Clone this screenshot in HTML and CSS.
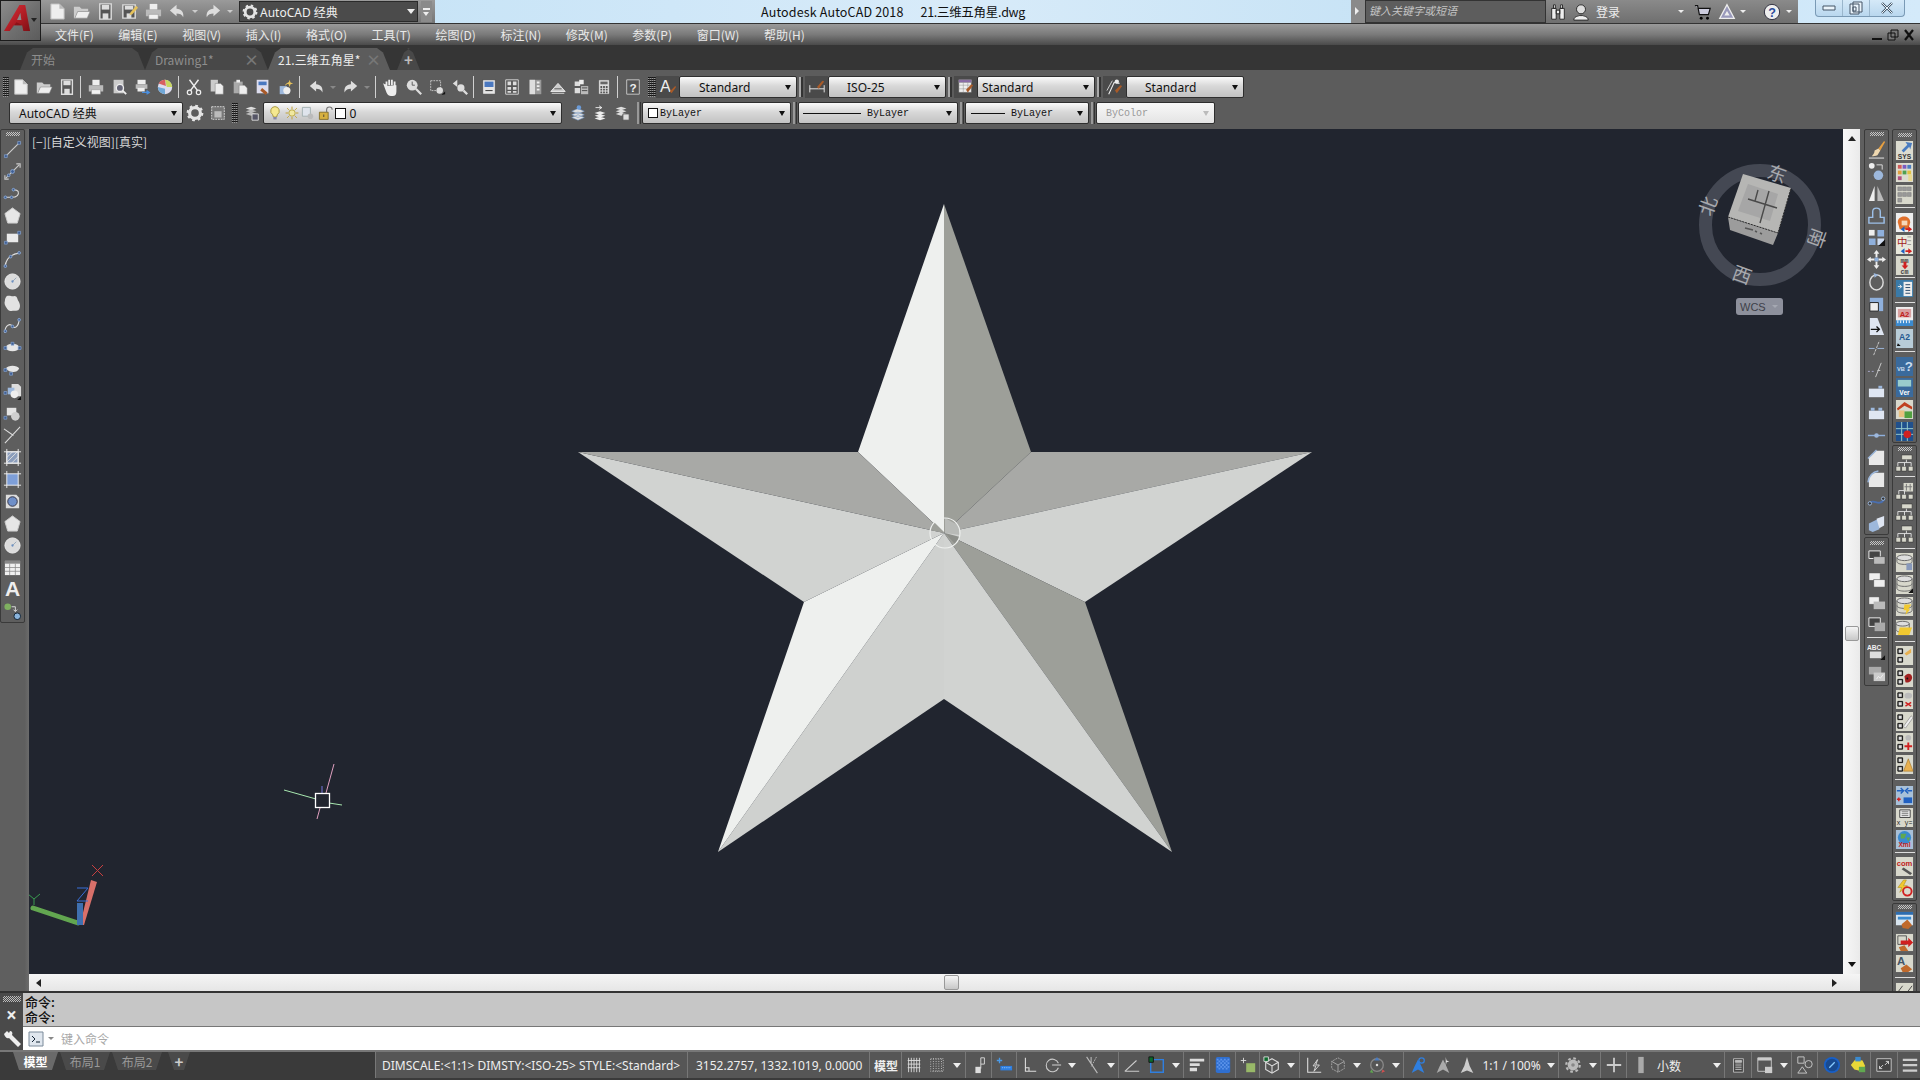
FILE: index.html
```html
<!DOCTYPE html>
<html lang="zh">
<head>
<meta charset="utf-8">
<title>Autodesk AutoCAD 2018</title>
<link rel="stylesheet" href="styles.css">
</head>
<body>
<svg class="defs" aria-hidden="true">
<defs><linearGradient id="logored" x1="0" y1="0" x2="1" y2="1"><stop offset="0" stop-color="#d8323a"/><stop offset=".55" stop-color="#b01c24"/><stop offset="1" stop-color="#7c1016"/></linearGradient></defs>
<symbol id="new" viewBox="0 0 20 20"><path d="M3 2h9l5 5v11H3z" fill="#eee" stroke="#bbb"/><path d="M12 2v5h5" fill="#bbb"/></symbol>
<symbol id="open" viewBox="0 0 20 20"><path d="M2 5h6l2 2h7v3H6l-3 7H2z" fill="#ccc"/><path d="M6 10h13l-3 7H3z" fill="#eee" stroke="#888" stroke-width=".6"/></symbol>
<symbol id="save" viewBox="0 0 20 20"><path d="M4 2h12v16H4z" fill="#555" stroke="#ddd" stroke-width="1.5"/><path d="M6 3h8v5H6z" fill="#ddd"/><path d="M7 12h6v6H7z" fill="#ddd"/></symbol>
<symbol id="saveas" viewBox="0 0 20 20"><path d="M3 3h13v14H3z" fill="#555" stroke="#ddd" stroke-width="1.5"/><path d="M5 4h9v4H5z" fill="#ddd"/><path d="M7 12h5v5H7z" fill="#ddd"/><path d="M11 11l6-7 2 2-6 7-3 1z" fill="#e6c25a"/></symbol>
<symbol id="print" viewBox="0 0 20 20"><path d="M6 2h8v6H6z" fill="#eee"/><path d="M2 8h16v7H2z" fill="#bbb"/><path d="M5 13h10v5H5z" fill="#f2f2f2" stroke="#888" stroke-width=".5"/></symbol>
<symbol id="preview" viewBox="0 0 20 20"><path d="M4 2h11v15H4z" fill="#ccc"/><circle cx="11" cy="11" r="4" fill="#667" stroke="#eee" stroke-width="1.5"/><path d="M14 14l4 4" stroke="#eee" stroke-width="2"/></symbol>
<symbol id="publish" viewBox="0 0 20 20"><path d="M5 2h9v5H5z" fill="#eee"/><path d="M3 7h13v5H3z" fill="#bbb"/><path d="M5 11h8v4H5z" fill="#eee"/><path d="M10 16h7M15 14l3 2-3 2" stroke="#4a8fe0" fill="none" stroke-width="1.5"/></symbol>
<symbol id="ball" viewBox="0 0 20 20"><circle cx="10" cy="10" r="8" fill="#dde"/><path d="M10 2a8 8 0 0 1 8 8h-6z" fill="#c8d860"/><path d="M3 6a8 8 0 0 1 7-4l1 7z" fill="#d86060"/><path d="M2 10a8 8 0 0 0 8 8V12z" fill="#70a8d8"/></symbol>
<symbol id="cut" viewBox="0 0 20 20"><path d="M5 2l9 12M15 2L6 14" stroke="#eee" stroke-width="1.6"/><circle cx="5" cy="16" r="2.4" fill="none" stroke="#eee" stroke-width="1.4"/><circle cx="15" cy="16" r="2.4" fill="none" stroke="#eee" stroke-width="1.4"/></symbol>
<symbol id="copy" viewBox="0 0 20 20"><path d="M3 2h8v13H3z" fill="#ccc"/><path d="M8 6h6l3 3v9H8z" fill="#eee" stroke="#777" stroke-width=".5"/></symbol>
<symbol id="paste" viewBox="0 0 20 20"><path d="M3 4h10v13H3z" fill="#aaa"/><path d="M6 2h4v3H6z" fill="#eee"/><path d="M9 8h6l3 3v7H9z" fill="#eee" stroke="#777" stroke-width=".5"/></symbol>
<symbol id="match" viewBox="0 0 20 20"><path d="M3 2h13v15H3z" fill="#dde"/><path d="M5 4h9v4H5z" fill="#4a78c0"/><path d="M9 11l6 5-2 3-6-5z" fill="#a85a28"/></symbol>
<symbol id="bstar" viewBox="0 0 20 20"><path d="M3 9h8v9H3z" fill="#9db8dc"/><circle cx="11" cy="14" r="4" fill="#eee"/><path d="M14 2l1 3 3 1-3 1-1 3-1-3-3-1 3-1z" fill="#e6c25a"/><path d="M9 8l4-3" stroke="#e6c25a"/></symbol>
<symbol id="undo" viewBox="0 0 20 20"><path d="M9 3L2 9l7 6v-3c3 0 6 1 7 4 1-5-2-9-7-9z" fill="#ddd"/></symbol>
<symbol id="redo" viewBox="0 0 20 20"><path d="M11 3l7 6-7 6v-3c-3 0-6 1-7 4-1-5 2-9 7-9z" fill="#ddd"/></symbol>
<symbol id="pan" viewBox="0 0 20 20"><path d="M5 9V4M8 8V2M11 8V2M14 9V4M5 9l-2-1 3 8c1 2 2 3 4 3h2c2 0 3-2 3-4V8" fill="#eee" stroke="#eee" stroke-width="2"/></symbol>
<symbol id="zrt" viewBox="0 0 20 20"><circle cx="8" cy="8" r="6" fill="#ddd"/><path d="M8 4v4h3" stroke="#555" fill="none"/><path d="M12 12l6 6" stroke="#ddd" stroke-width="2.5"/></symbol>
<symbol id="zwin" viewBox="0 0 20 20"><path d="M3 3h11v11H3z" fill="none" stroke="#ccc" stroke-dasharray="2 1"/><circle cx="13" cy="14" r="3.6" fill="#ddd"/><path d="M15 19l4-1v-3z" fill="#111"/></symbol>
<symbol id="zprev" viewBox="0 0 20 20"><path d="M2 6l5-4v8z" fill="#ddd"/><circle cx="11" cy="11" r="4" fill="#ddd"/><path d="M14 14l4 4" stroke="#ddd" stroke-width="2.5"/></symbol>
<symbol id="props" viewBox="0 0 20 20"><path d="M3 2h14v16H3z" fill="#e6e6e6" stroke="#333" stroke-width=".6"/><path d="M5 4h10v6H5z" fill="#4a78c0"/><path d="M6 14h8" stroke="#222"/></symbol>
<symbol id="dc" viewBox="0 0 20 20"><path d="M3 2h14v16H3z" fill="#555" stroke="#ddd"/><path d="M5 4h4v4H5zM11 4h4v4h-4zM5 10h4v3H5zM11 10h4v3h-4zM5 14.500h4v2H5zM11 14.500h4v2h-4z" fill="#ddd"/></symbol>
<symbol id="tool" viewBox="0 0 20 20"><path d="M4 2h13v16H4z" fill="#999"/><path d="M4 2h6v16H4z" fill="#ddd"/><path d="M12 5h3M12 9h3M12 13h3" stroke="#eee" stroke-width="2"/></symbol>
<symbol id="sheet" viewBox="0 0 20 20"><path d="M2 15L10 6l8 9z" fill="#ccc" stroke="#eee"/><path d="M6 12h8" stroke="#555"/><path d="M3 17h14" stroke="#ddd"/></symbol>
<symbol id="mark" viewBox="0 0 20 20"><path d="M3 4h6v5H3zM3 11h6v6H3z" fill="#ddd"/><path d="M8 2h5v5H8z" fill="#eee"/><path d="M10 9h8v9h-8z" fill="#bbb"/><path d="M11 11h6M11 14h6" stroke="#444"/></symbol>
<symbol id="calc" viewBox="0 0 20 20"><path d="M4 2h12v16H4z" fill="#ddd" stroke="#333" stroke-width=".5"/><path d="M6 4h8v3H6z" fill="#666"/><path d="M6 9h2v2H6zM9 9h2v2H9zM12 9h2v2h-2zM6 12h2v2H6zM9 12h2v2H9zM12 12h2v2h-2zM6 15h2v2H6zM9 15h2v2H9zM12 15h2v2h-2z" fill="#555"/></symbol>
<symbol id="gear" viewBox="0 0 20 20"><circle cx="10" cy="10" r="6" fill="none" stroke="#e4e4e4" stroke-width="3.500"/><circle cx="10" cy="10" r="8" fill="none" stroke="#e4e4e4" stroke-width="2.600" stroke-dasharray="3 3.280"/></symbol>
<symbol id="wsset" viewBox="0 0 20 20"><path d="M3 3h14v14H3z" fill="#777" stroke="#ddd" stroke-dasharray="2 1"/><path d="M6 8h8v7H6z" fill="#bbb"/></symbol>
<symbol id="layer" viewBox="0 0 20 20"><path d="M3 5l6-2 6 2-6 2z" fill="#ddd"/><path d="M3 8l6-2 6 2-6 2zM3 11l6-2 6 2-6 2z" fill="#bbb"/><path d="M10 11h7v7h-7z" fill="#556" stroke="#ddd"/></symbol>
<symbol id="layercur" viewBox="0 0 20 20"><path d="M3 8l7-3 7 3-7 3zM3 12l7-3 7 3-7 3zM3 15l7-3 7 3-7 3z" fill="#e0e0e0" stroke="#6b8fc0" stroke-width=".6"/><circle cx="11" cy="4" r="2.500" fill="#6b9bd8"/></symbol>
<symbol id="layerst" viewBox="0 0 20 20"><path d="M4 10l6-2 6 2-6 2zM4 13l6-2 6 2-6 2zM4 16l6-2 6 2-6 2z" fill="#eee"/><path d="M5 4h7M9 2l3 2-3 2" stroke="#eee" fill="none"/></symbol>
<symbol id="layerdoc" viewBox="0 0 20 20"><path d="M3 5l6-2 6 2-6 2zM3 8l6-2 6 2-6 2zM3 11l6-2 6 2-6 2z" fill="#ddd"/><path d="M11 11h7v7h-7z" fill="#ddd" stroke="#555"/></symbol>
<symbol id="bulb" viewBox="0 0 20 20"><path d="M10 2a5.500 5.500 0 0 1 3 10l-1 3H8l-1-3a5.500 5.500 0 0 1 3-10z" fill="#f5e890" stroke="#9a8a30"/><path d="M8 15h4v3H8z" fill="#8888a8"/></symbol>
<symbol id="sun" viewBox="0 0 20 20"><circle cx="10" cy="10" r="4" fill="#f0e8a0" stroke="#b09a30"/><path d="M10 2v3M10 15v3M2 10h3M15 10h3M4 4l2 2M14 14l2 2M16 4l-2 2M4 16l2-2" stroke="#c0a030" stroke-width="1.200"/></symbol>
<symbol id="vpf" viewBox="0 0 20 20"><path d="M3 3h10v11H3z" fill="#dfe4ec" stroke="#9aa"/><circle cx="13" cy="14" r="3.500" fill="#bbb"/></symbol>
<symbol id="lock" viewBox="0 0 20 20"><path d="M3 9h11v9H3z" fill="#d6b040" stroke="#7a6420"/><path d="M6 9V6a3.500 3.500 0 0 1 7 0" fill="none" stroke="#777" stroke-width="1.400" transform="translate(6 0)"/><path d="M8 12h1v3H8z" fill="#333"/></symbol>
<symbol id="dim-style" viewBox="0 0 20 20"><path d="M2 8v8M18 8v8M2 12h16" stroke="#eee"/><path d="M10 10l6-7 2 1-6 8z" fill="#a85a28"/></symbol>
<symbol id="tb-style" viewBox="0 0 20 20"><path d="M2 2h14v14H2z" fill="#eee" stroke="#555" stroke-width=".5"/><path d="M2 2h14v3H2zM2 8h14M2 12h14M7 5v11M12 5v11" fill="#8a6aa8" stroke="#888" stroke-width=".5"/><path d="M10 13l6-6 2 1-6 8z" fill="#a85a28"/></symbol>
<symbol id="ml-style" viewBox="0 0 20 20"><path d="M3 18L9 5l6 1" fill="none" stroke="#eee" stroke-width="1.200"/><path d="M1 14L7 3" stroke="#ddd"/><circle cx="12" cy="4" r="2.400" fill="#eee"/><path d="M10 14l6-6 2 1-6 8z" fill="#a85a28"/></symbol>
<symbol id="line" viewBox="0 0 20 20"><path d="M3 17L17 3" stroke="#ccc" stroke-width="1.200"/><path d="M1.500 15.500h3v3h-3zM15.500 1.500h3v3h-3z" fill="#3f5f95" stroke="#8aa6d0" stroke-width=".7"/></symbol>
<symbol id="xline" viewBox="0 0 20 20"><path d="M3 17L17 3" stroke="#ccc" stroke-width="1.200"/><path d="M2 14v4h4M14 2h4v4" stroke="#ccc" fill="none" stroke-width="1.200"/><circle cx="10" cy="10" r="2" fill="#3f5f95" stroke="#8aa6d0"/><circle cx="6" cy="14" r="1.400" fill="#3f5f95" stroke="#8aa6d0"/></symbol>
<symbol id="pline" viewBox="0 0 20 20"><path d="M2 14h7c6 0 8-3 7-6-1-2-3-2-5-2" stroke="#ddd" fill="none" stroke-width="1.100"/><circle cx="2.500" cy="14" r="1.400" fill="#3f5f95" stroke="#8aa6d0"/><circle cx="9" cy="14" r="1.400" fill="#3f5f95" stroke="#8aa6d0"/><circle cx="11" cy="6" r="1.400" fill="#3f5f95" stroke="#8aa6d0"/></symbol>
<symbol id="poly" viewBox="0 0 20 20"><path d="M10 2l8 6-3 10H5L2 8z" fill="#e6e6e6" stroke="#ccc"/></symbol>
<symbol id="rect" viewBox="0 0 20 20"><path d="M4 6h12v9H4z" fill="#eaeaea"/><path d="M1.500 14h3v3h-3zM15.500 3.500h3v3h-3z" fill="#3f5f95" stroke="#8aa6d0" stroke-width=".7"/></symbol>
<symbol id="arc" viewBox="0 0 20 20"><path d="M2 18C3 9 9 4 18 3" stroke="#ddd" fill="none" stroke-width="1.200"/><circle cx="2.500" cy="17" r="1.400" fill="#3f5f95" stroke="#8aa6d0"/><circle cx="8" cy="7" r="1.400" fill="#3f5f95" stroke="#8aa6d0"/><circle cx="17" cy="3" r="1.400" fill="#3f5f95" stroke="#8aa6d0"/></symbol>
<symbol id="circle" viewBox="0 0 20 20"><circle cx="10" cy="10" r="8" fill="#dcdcdc" stroke="#eee"/><path d="M10 10l4-4" stroke="#9ab"/><circle cx="10" cy="10" r="1.200" fill="#6b8fc0"/></symbol>
<symbol id="cloud" viewBox="0 0 20 20"><path d="M4 2c4-1 5 1 8 0 3 0 3 3 4 5 2 3 3 7 0 10-3 1-5 0-7 1-2 0-4-1-5-3-2-3-3-5-2-8 0-2 1-4 2-5z" fill="#e2e2e2"/></symbol>
<symbol id="spline" viewBox="0 0 20 20"><path d="M2 18C2 8 8 8 10 11s7 0 7-8" stroke="#ddd" fill="none" stroke-width="1.200"/><circle cx="2.500" cy="16" r="1.400" fill="#3f5f95" stroke="#8aa6d0"/><circle cx="10" cy="11" r="1.400" fill="#3f5f95" stroke="#8aa6d0"/><circle cx="17" cy="4" r="1.400" fill="#3f5f95" stroke="#8aa6d0"/></symbol>
<symbol id="ell" viewBox="0 0 20 20"><ellipse cx="10" cy="10" rx="7" ry="4" fill="#e6e6e6"/><path d="M1 9h3v3H1zM16 9h3v3h-3zM8.500 4.500h3v3h-3z" fill="#3f5f95" stroke="#8aa6d0" stroke-width=".7"/></symbol>
<symbol id="ellarc" viewBox="0 0 20 20"><path d="M3 9c2-4 12-4 14 0-2 5-10 5-14 0z" fill="#e6e6e6"/><path d="M1 9h3v3H1zM7 13h3v3H7z" fill="#3f5f95" stroke="#8aa6d0" stroke-width=".7"/></symbol>
<symbol id="insert" viewBox="0 0 20 20"><path d="M9 2h7l3 3v10H9z" fill="#ddd"/><path d="M5 6h7v7H5z" fill="#9db8dc"/><circle cx="12" cy="13" r="4" fill="#eee"/><path d="M1 10h3v3H1z" fill="#3f5f95" stroke="#8aa6d0" stroke-width=".7"/><path d="M15 19h4v-4z" fill="#111"/></symbol>
<symbol id="block" viewBox="0 0 20 20"><path d="M4 4h10v8H4z" fill="#e4e4e4"/><circle cx="13" cy="13" r="4.500" fill="#cfcfcf"/><path d="M1 13h3v3H1z" fill="#3f5f95" stroke="#8aa6d0" stroke-width=".7"/></symbol>
<symbol id="point" viewBox="0 0 20 20"><path d="M1 3l10 7M18 1L2 18" stroke="#ddd" stroke-width="1.100"/></symbol>
<symbol id="hatch" viewBox="0 0 20 20"><path d="M4 4h12v12H4z" fill="#8b9dbb" stroke="#eee"/><path d="M4 10l6-6M4 15L15 4M9 16l7-7" stroke="#ddd"/><path d="M1 4h18M1 16h18M4 1v18M16 1v18" stroke="#eee"/></symbol>
<symbol id="grad" viewBox="0 0 20 20"><path d="M4 4h12v12H4z" fill="#7e9fd8"/><path d="M1 4h18M1 16h18M4 1v18M16 1v18" stroke="#eee"/></symbol>
<symbol id="region" viewBox="0 0 20 20"><path d="M3 3h11l3 3v11H3z" fill="#ddd"/><circle cx="10" cy="10" r="5" fill="#6f8fc8" stroke="#334"/></symbol>
<symbol id="table" viewBox="0 0 20 20"><path d="M2 3h16v15H2z" fill="#f0f0f0"/><path d="M2 3h16v3H2z" fill="#888"/><path d="M2 10h16M2 14h16M7 6v12M13 6v12" stroke="#888" stroke-width=".8"/></symbol>
<symbol id="addpt" viewBox="0 0 20 20"><circle cx="5" cy="5" r="3.500" fill="#7fb060"/><circle cx="15" cy="15" r="3.500" fill="#8ab4dc" stroke="#123"/><path d="M9 5h4v5M11 8l2 2 2-2" stroke="#ddd" fill="none"/></symbol>
<symbol id="brush" viewBox="0 0 20 20"><path d="M12 9l6-8 1 1-5 9z" fill="#e8a040"/><path d="M8 11l4-2 2 2-3 5c-2 1-4 1-6 1 1-1 3-3 3-6z" fill="#efd8b0"/><path d="M2 19h16" stroke="#eee"/></symbol>
<symbol id="copy3" viewBox="0 0 20 20"><circle cx="5" cy="4" r="3" fill="#eee"/><circle cx="12" cy="14" r="5" fill="#9db8dc"/><path d="M10 3h6v5" stroke="#ddd" fill="none"/></symbol>
<symbol id="mirror" viewBox="0 0 20 20"><path d="M8 2v16H2z" fill="#eee"/><path d="M11 2v16h7z" fill="#bbb"/></symbol>
<symbol id="offs" viewBox="0 0 20 20"><path d="M2 18V12h4V6c0-5 8-5 8 0v6h4v6z" fill="none" stroke="#9dc0e8" stroke-width="1.500"/></symbol>
<symbol id="arr" viewBox="0 0 20 20"><path d="M2 2h6v6H2z" fill="#eee"/><path d="M11 2h7v7h-7zM2 11h7v7H2z" fill="#8fb0dc"/><path d="M11 11h7v7h-7z" fill="#cfdcf0"/><path d="M12 19h7v-7z" fill="#111"/></symbol>
<symbol id="move" viewBox="0 0 20 20"><path d="M10 0l3 4h-2v4H9V4H7zM10 20l-3-4h2v-4h2v4h2zM0 10l4-3v2h4v2H4v2zM20 10l-4 3v-2h-4V9h4V7z" fill="#eee"/><path d="M8 8h4v4H8z" fill="#8fb0dc"/></symbol>
<symbol id="rot" viewBox="0 0 20 20"><ellipse cx="10" cy="11" rx="7" ry="8" fill="none" stroke="#ddd" stroke-width="1.500"/><path d="M7 1l5 2-4 3z" fill="#9db8dc"/></symbol>
<symbol id="scale" viewBox="0 0 20 20"><path d="M3 4h14v14H3z" fill="#8fb0dc"/><path d="M3 9h9v9H3z" fill="#eee" stroke="#222"/></symbol>
<symbol id="stretch" viewBox="0 0 20 20"><path d="M3 2h8l7 18H3z" fill="#dfe6f2"/><path d="M4 14h9M10 11l3 3-3 3" stroke="#111" fill="none" stroke-width="1.400"/></symbol>
<symbol id="trim" viewBox="0 0 20 20"><path d="M2 11h6M11 11h7" stroke="#9db8dc"/><path d="M7 18L13 3" stroke="#ccc" stroke-dasharray="3 1"/></symbol>
<symbol id="ext" viewBox="0 0 20 20"><path d="M1 12h8" stroke="#aac" stroke-dasharray="2 2"/><path d="M11 11h3M9 18l6-15" stroke="#ccc"/></symbol>
<symbol id="brk" viewBox="0 0 20 20"><path d="M2 7h16v9H2z" fill="#dfe6f2"/><path d="M12 4h4v3h-4z" fill="#9db8dc"/></symbol>
<symbol id="brk2" viewBox="0 0 20 20"><path d="M2 7h16v9H2z" fill="#dfe6f2"/><path d="M4 4h4v3H4zM12 4h4v3h-4z" fill="#9db8dc"/></symbol>
<symbol id="join" viewBox="0 0 20 20"><path d="M1 10h18" stroke="#8fb0dc" stroke-width="1.500"/><circle cx="10" cy="10" r="2.400" fill="#9db8dc"/></symbol>
<symbol id="cham" viewBox="0 0 20 20"><path d="M2 18V10L10 3h8v15z" fill="#e8e8e8"/><path d="M1 11L10 2" stroke="#9db8dc" stroke-width="1.500"/></symbol>
<symbol id="fil" viewBox="0 0 20 20"><path d="M2 18v-8c0-4 4-7 8-7h8v15z" fill="#e8e8e8"/><path d="M1 13C2 6 6 2 12 1" stroke="#9db8dc" stroke-width="1.500" fill="none"/></symbol>
<symbol id="blend" viewBox="0 0 20 20"><path d="M2 12c5-6 10 4 16-4" stroke="#4a6fb0" fill="none" stroke-width="2"/><circle cx="3" cy="12" r="1.800" fill="#333" stroke="#9db8dc"/><circle cx="17" cy="7" r="1.800" fill="#333" stroke="#9db8dc"/></symbol>
<symbol id="expl" viewBox="0 0 20 20"><path d="M2 10l8-4 3 1v9l-7 3-4-2z" fill="#9db8dc"/><path d="M10 5l8-3v10l-5 3z" fill="#dfe6f2"/></symbol>
<symbol id="ord1" viewBox="0 0 20 20"><path d="M2 2h12v8H2z" fill="#444" stroke="#eee"/><path d="M7 8h12v8H7z" fill="#bbb" stroke="#333" stroke-width=".5"/></symbol>
<symbol id="ord2" viewBox="0 0 20 20"><path d="M2 2h12v8H2z" fill="#eee" stroke="#333" stroke-width=".5"/><path d="M7 9h12v8H7z" fill="#eee" stroke="#333" stroke-width=".5"/></symbol>
<symbol id="ord3" viewBox="0 0 20 20"><path d="M2 4h11v8H2z" fill="#eee" stroke="#333" stroke-width=".5"/><path d="M7 9h12v8H7z" fill="#bbb"/></symbol>
<symbol id="ord4" viewBox="0 0 20 20"><path d="M2 3h12v9H2z" fill="#444" stroke="#eee"/><path d="M8 8h11v9H8z" fill="#aaa"/></symbol>
<symbol id="wipe" viewBox="0 0 20 20"><path d="M2 3h13v8H2z" fill="#aaa"/><path d="M7 9h12v9H7z" fill="#ccc"/><path d="M10 16l2-3 2 2 3-4" stroke="#eee" fill="none"/></symbol>
<symbol id="t-grid" viewBox="0 0 20 20"><path d="M1 0h18v20H1z" fill="#dcdcd0"/><path d="M3 2h4v4H3z" fill="#d05a5a"/><path d="M8 2h4v4H8z" fill="#7a5ac0"/><path d="M13 2h4v4h-4z" fill="#4a7cc0"/><path d="M3 8h4v4H3z" fill="#e0a040"/><path d="M8 8h4v4H8z" fill="#50a050"/><path d="M13 8h4v4h-4z" fill="#e0c040"/><path d="M3 14h4v4H3z" fill="#b05080"/><path d="M14 12h4v7h-4z" fill="#e8d890"/></symbol>
<symbol id="t-grid2" viewBox="0 0 20 20"><path d="M1 0h18v20H1z" fill="#d8d8cc"/><path d="M3 2h4v4H3zM8 2h4v4H8zM13 2h4v4h-4zM3 8h4v4H3zM8 8h4v4H8zM13 8h4v4h-4zM3 14h4v4H3z" fill="#999" stroke="#777" stroke-width=".5"/></symbol>
<symbol id="t-girl" viewBox="0 0 20 20"><path d="M1 0h18v20H1z" fill="#eee"/><path d="M3 10C2 2 16 1 16 10l-2 7H5z" fill="#e0702c"/><path d="M7 8h6v5H7z" fill="#f6d6b8"/><path d="M11 16h3v-2l4 3-4 3v-2h-3z" fill="#d02020"/><path d="M10 14l-4 3 4 3z" fill="#2060c0"/></symbol>
<symbol id="t-doc" viewBox="0 0 20 20"><path d="M1 1h18v18H1z" fill="#3a7aa8"/><path d="M9 3h9v15H9z" fill="#eee"/><path d="M11 6h5M11 9h5M11 12h5M11 15h5" stroke="#246"/><path d="M3 8h4M5 6l2 2-2 2" stroke="#eee" fill="none"/></symbol>
<symbol id="t-house" viewBox="0 0 20 20"><path d="M1 0h18v20H1z" fill="#d8d8cc"/><path d="M2 9l8-7 8 5v3l-8-4-7 5z" fill="#c04020"/><path d="M4 11h6v7H4z" fill="#e8c080"/><path d="M10 12h8v7h-8z" fill="#50a040"/></symbol>
<symbol id="t-bgrid" viewBox="0 0 20 20"><path d="M1 0h18v20H1z" fill="#20508c"/><path d="M1 7h18M1 13h18M7 0v20M13 0v20" stroke="#9cc"/><circle cx="13" cy="13" r="4" fill="#d02020"/></symbol>
<symbol id="t-tree" viewBox="0 0 20 20"><path d="M7 1h11v5H7zM1 13h5v5H1zM7 13h5v5H7zM14 13h5v5h-5z" fill="#d8d8cc" stroke="#333" stroke-width=".6"/><path d="M12 6v3M3 9h14M3 9v4M10 9v4M17 9v4" stroke="#ddd"/></symbol>
<symbol id="t-tree2" viewBox="0 0 20 20"><path d="M1 13h5v5H1zM7 13h5v5H7zM14 13h5v5h-5z" fill="#d8d8cc" stroke="#333" stroke-width=".6"/><path d="M9 1h10v9H9z" fill="#d8d8cc"/><path d="M12 2v7M16 2v7M10 5h8" stroke="#777"/><path d="M4 9v4M4 9h6M10 9v4" stroke="#ddd"/></symbol>
<symbol id="t-db" viewBox="0 0 20 20"><path d="M1 0h18v20H1z" fill="#d8d8cc"/><ellipse cx="10" cy="5" rx="8" ry="3" fill="#ddd" stroke="#666"/><path d="M2 5v4c0 2 4 3 8 3s8-1 8-3V5" fill="none" stroke="#666"/><path d="M12 11h6v7h-6z" fill="#8899bb"/></symbol>
<symbol id="t-db2" viewBox="0 0 20 20"><path d="M1 0h18v20H1z" fill="#d8d8cc"/><ellipse cx="10" cy="4" rx="8" ry="3" fill="#ddd" stroke="#666"/><path d="M2 4v10c0 2 4 3 8 3s8-1 8-3V4M2 9c0 2 4 3 8 3s8-1 8-3" fill="none" stroke="#666"/><path d="M14 19h5v-5z" fill="#111"/></symbol>
<symbol id="t-db3" viewBox="0 0 20 20"><path d="M1 0h18v20H1z" fill="#d8d8cc"/><ellipse cx="10" cy="4" rx="8" ry="3" fill="#ddd" stroke="#666"/><path d="M2 4v10c0 2 4 3 8 3s8-1 8-3V4M2 9c0 2 4 3 8 3s8-1 8-3" fill="none" stroke="#666"/><path d="M10 8h7l-3 5h2l-5 6 1-5H9z" fill="#f0c830"/></symbol>
<symbol id="t-db4" viewBox="0 0 20 20"><path d="M1 2h18v16H1z" fill="#d8d8cc"/><ellipse cx="8" cy="6" rx="7" ry="2.500" fill="#ddd" stroke="#666"/><path d="M1 6v6c0 2 3 3 7 3s7-1 7-3V6" fill="none" stroke="#666"/><path d="M5 10h13l-3 8H3z" fill="#f0c830"/></symbol>
<symbol id="t-c" viewBox="0 0 20 20"><path d="M1 0h18v20H1z" fill="#d8d8cc"/><path d="M3 3h5v5H3zM3 12h5v5H3z" fill="#555" stroke="#111"/><path d="M4 4h3v3H4zM4 13h3v3H4z" fill="#ddd"/><path d="M10 8l7-5v4l-5 3z" fill="#e8b050"/></symbol>
<symbol id="t-c2" viewBox="0 0 20 20"><path d="M1 0h18v20H1z" fill="#d8d8cc"/><path d="M3 3h5v5H3zM3 12h5v5H3z" fill="#555" stroke="#111"/><path d="M4 4h3v3H4zM4 13h3v3H4z" fill="#ddd"/><path d="M10 9c3-5 8-3 8 1s-4 6-7 5z" fill="#a02020"/><circle cx="13" cy="11" r="1" fill="#111"/></symbol>
<symbol id="t-c3" viewBox="0 0 20 20"><path d="M1 0h18v20H1z" fill="#d8d8cc"/><path d="M3 3h5v5H3zM3 12h5v5H3z" fill="#555" stroke="#111"/><path d="M4 4h3v3H4zM4 13h3v3H4z" fill="#ddd"/><ellipse cx="14" cy="6" rx="4" ry="3" fill="#bbb"/><path d="M11 13l6 4M17 13l-6 4" stroke="#d02020" stroke-width="1.500"/></symbol>
<symbol id="t-c4" viewBox="0 0 20 20"><path d="M1 0h18v20H1z" fill="#d8d8cc"/><path d="M3 3h5v5H3zM3 12h5v5H3z" fill="#555" stroke="#111"/><path d="M4 4h3v3H4zM4 13h3v3H4z" fill="#ddd"/><path d="M9 15l8-11 2 2-8 11z" fill="#eee" stroke="#777" stroke-width=".6"/></symbol>
<symbol id="t-c5" viewBox="0 0 20 20"><path d="M1 0h18v20H1z" fill="#d8d8cc"/><path d="M3 3h5v5H3zM3 12h5v5H3z" fill="#555" stroke="#111"/><path d="M4 4h3v3H4zM4 13h3v3H4z" fill="#ddd"/><circle cx="14" cy="5" r="3" fill="#bbb"/><path d="M14 10v8M10 14h8" stroke="#d02020" stroke-width="2"/></symbol>
<symbol id="t-c6" viewBox="0 0 20 20"><path d="M1 0h18v20H1z" fill="#d8d8cc"/><path d="M3 3h5v5H3zM3 12h5v5H3z" fill="#555" stroke="#111"/><path d="M4 4h3v3H4zM4 13h3v3H4z" fill="#ddd"/><path d="M14 4l5 13H9z" fill="#e8b050" stroke="#a07020" stroke-width=".6"/></symbol>
<symbol id="t-xyz" viewBox="0 0 20 20"><path d="M1 0h18v20H1z" fill="#a8c0d8"/><path d="M2 5h7M6 2l3 3-3 3M18 5h-5M14 2l-3 3 3 3" stroke="#2060c0" fill="none" stroke-width="1.500"/><path d="M2 14h4M4 12v4" stroke="#d02020" stroke-width="1.500"/><path d="M9 12h9v6H9z" fill="#2060c0"/></symbol>
<symbol id="t-bolt" viewBox="0 0 20 20"><path d="M1 0h18v20H1z" fill="#d8d8cc"/><path d="M9 1L3 9h4l-2 5 8-7H9l3-6z" fill="#f0c830" stroke="#a08010" stroke-width=".5"/><circle cx="13" cy="13" r="4.500" fill="none" stroke="#d02020" stroke-width="2"/></symbol>
<symbol id="t-hand" viewBox="0 0 20 20"><path d="M1 1h18v14H1z" fill="#d8e4ee"/><path d="M1 1h18v3H1z" fill="#2d6db0"/><path d="M3 6h14v3H3z" fill="#3a8ad0"/><path d="M7 14l6-5 5 6-4 4-6-1z" fill="#c06a2c"/></symbol>
<symbol id="t-harrow" viewBox="0 0 20 20"><path d="M1 1h18v18H1z" fill="#d8d8cc"/><path d="M3 3h9v9H3z" fill="none" stroke="#555"/><path d="M6 8h8v-3l5 5-5 5v-3H6z" fill="#d02020"/><path d="M4 15l6-2 4 6H6z" fill="#c06a2c"/></symbol>
<symbol id="t-last" viewBox="0 0 20 20"><path d="M1 1h18v18H1z" fill="#d8d8cc"/><path d="M2 12L8 4M12 12l6-8" stroke="#444"/></symbol>
<symbol id="s-grid" viewBox="0 0 20 20"><path d="M4 2v16M7 2v16M10 2v16M13 2v16M16 2v16M3 5h14M3 9h14M3 13h14" stroke="#ddd" stroke-width="1"/></symbol>
<symbol id="s-snap" viewBox="0 0 20 20"><path d="M3 3h14v14H3z" fill="none" stroke="#ccc" stroke-dasharray="1 1.600"/><path d="M6 3v14M9 3v14M12 3v14M15 3v14" stroke="#ccc" stroke-dasharray="1 1.600"/></symbol>
<symbol id="s-note" viewBox="0 0 20 20"><path d="M12 2h4v7h-4z" fill="none" stroke="#ddd"/><path d="M12 9v5" stroke="#ddd"/><path d="M6 12h6v7H6z" fill="#ddd"/></symbol>
<symbol id="s-dyn" viewBox="0 0 20 20"><path d="M2 5h6M5 2v6" stroke="#4a9ae8" stroke-width="1.500"/><path d="M6 11h13v5H6z" fill="#2f7fe0"/><path d="M8 13h9" stroke="#9cf" stroke-dasharray="1 1"/></symbol>
<symbol id="s-ortho" viewBox="0 0 20 20"><path d="M6 2v15h12M6 13h4v4" fill="none" stroke="#ddd" stroke-width="1.200"/></symbol>
<symbol id="s-polar" viewBox="0 0 20 20"><path d="M16 8a7 7 0 1 0 0 5" fill="none" stroke="#ccc" stroke-width="1.200"/><path d="M9 10h10" stroke="#ccc" stroke-width="1.200"/></symbol>
<symbol id="s-iso" viewBox="0 0 20 20"><path d="M4 1l12 18M9 1v7" fill="none" stroke="#bbb" stroke-width="1.200"/><path d="M15 1L9 12" stroke="#bbb" stroke-dasharray="2 1"/></symbol>
<symbol id="s-track" viewBox="0 0 20 20"><path d="M2 17h16M2 17L15 5" stroke="#ccc" stroke-width="1.200"/></symbol>
<symbol id="s-osnap" viewBox="0 0 20 20"><path d="M3 4h14v14H3z" fill="none" stroke="#2f7fe0" stroke-width="1.600"/><path d="M1 1h5v6H1z" fill="#0c6a2c" stroke="#111"/></symbol>
<symbol id="s-lw" viewBox="0 0 20 20"><path d="M2 3h16v3H2zM2 8h11v3H2zM2 13h8v4H2z" fill="#ddd"/></symbol>
<symbol id="s-trans" viewBox="0 0 20 20"><rect x="2" y="1" width="16" height="18" rx="2" fill="#2f6fd0"/><path d="M3 3h2v2H3zM7 3h2v2H7zM11 3h2v2h-2zM15 3h2v2h-2zM5 5h2v2H5zM9 5h2v2H9zM13 5h2v2h-2zM3 7h2v2H3zM7 7h2v2H7zM11 7h2v2h-2zM15 7h2v2h-2zM5 9h2v2H5zM9 9h2v2H9zM13 9h2v2h-2zM3 11h2v2H3zM7 11h2v2H7zM11 11h2v2h-2zM15 11h2v2h-2zM5 13h2v2H5zM9 13h2v2H9zM13 13h2v2h-2z" fill="#7fb0ff" opacity=".55"/></symbol>
<symbol id="s-sel" viewBox="0 0 20 20"><path d="M8 8h10v10H8z" fill="#98b868"/><path d="M2 5h6M5 2v6" stroke="#ddd"/></symbol>
<symbol id="s-cube" viewBox="0 0 20 20"><path d="M10 3l7 4v8l-7 4-7-4V7z" fill="none" stroke="#ddd" stroke-width="1.200"/><path d="M3 7l7 4 7-4M10 11v8" fill="none" stroke="#ddd" stroke-width="1.200"/><path d="M1 1h5v5H1z" fill="#0c6a2c" stroke="#ddd"/></symbol>
<symbol id="s-ucs" viewBox="0 0 20 20"><path d="M3 2v16h15" fill="none" stroke="#ddd" stroke-width="1.200"/><path d="M9 11l5-7-2 6h4l-6 7 2-6z" fill="none" stroke="#ddd"/></symbol>
<symbol id="s-cube2" viewBox="0 0 20 20"><path d="M10 2l7 4v8l-7 4-7-4V6z" fill="none" stroke="#aaa" stroke-dasharray="2 1"/><path d="M3 6l7 4 7-4M10 10v8" fill="none" stroke="#aaa"/></symbol>
<symbol id="s-gizmo" viewBox="0 0 20 20"><circle cx="10" cy="10" r="7" fill="none" stroke="#888" stroke-width="1.500"/><path d="M10 1l3 4H7z" fill="#4a7cc0"/><path d="M4 15l-2 3 4 1z" fill="#60a850"/><path d="M16 15l3 2-4 2z" fill="#d05050"/><circle cx="10" cy="10" r="1.400" fill="#ddd"/></symbol>
<symbol id="s-a" viewBox="0 0 20 20"><path d="M10 4L6 12l-3 7 7-4 7 4-3-7z" fill="#2f7fe0"/><circle cx="14" cy="5" r="3" fill="none" stroke="#2f7fe0" stroke-width="1.400"/></symbol>
<symbol id="s-a2" viewBox="0 0 20 20"><path d="M10 4L6 12l-3 7 7-4 7 4-3-7z" fill="#aaa"/><path d="M13 1l1 4 3 1-3 1-1 4" fill="#ddd"/></symbol>
<symbol id="s-a3" viewBox="0 0 20 20"><path d="M10 1L7 11l-4 8 7-3 7 3-4-8z" fill="#ccc"/></symbol>
<symbol id="s-gear" viewBox="0 0 20 20"><circle cx="10" cy="10" r="5" fill="#bbb" stroke="#bbb" stroke-width="2"/><circle cx="10" cy="10" r="7.500" fill="none" stroke="#bbb" stroke-width="2.400" stroke-dasharray="3 2.900"/><circle cx="10" cy="10" r="2" fill="#888"/></symbol>
<symbol id="s-plus" viewBox="0 0 20 20"><path d="M10 2v16M2 10h16" stroke="#ccc" stroke-width="2"/></symbol>
<symbol id="s-bar" viewBox="0 0 20 20"><path d="M7 1h6v18H7z" fill="#aaa"/></symbol>
<symbol id="s-calc" viewBox="0 0 20 20"><path d="M5 3h11v15H5z" fill="#444" stroke="#bbb"/><path d="M7 5h7v2H7zM7 9h7M7 11h7M7 13h7M7 15h7" stroke="#bbb" fill="#bbb"/></symbol>
<symbol id="s-win" viewBox="0 0 20 20"><path d="M2 2h15v15H2z" fill="none" stroke="#ccc"/><path d="M2 2h15v3H2z" fill="#ccc"/><path d="M10 12h8v7h-8z" fill="#ccc"/></symbol>
<symbol id="s-shape" viewBox="0 0 20 20"><path d="M2 1h7v7H2z" fill="none" stroke="#ccc"/><circle cx="14" cy="9" r="4" fill="none" stroke="#ccc"/><path d="M7 12l5 7H2z" fill="none" stroke="#ccc"/></symbol>
<symbol id="s-hw" viewBox="0 0 20 20"><circle cx="10" cy="10" r="9" fill="#1860c8"/><circle cx="10" cy="10" r="7" fill="#184a90"/><path d="M7 13l6-6" stroke="#8cf" stroke-width="1.400"/></symbol>
<symbol id="s-iso2" viewBox="0 0 20 20"><path d="M2 10l5-6 8 1 3 6-4 6-8-2z" fill="#e8d838"/><path d="M7 1h6v5H7z" fill="#3a8ad0"/><path d="M11 12h7v6h-7z" fill="#60a850"/></symbol>
<symbol id="s-full" viewBox="0 0 20 20"><path d="M2 3h16v14H2z" fill="#444" stroke="#ccc"/><path d="M5 14l4-4M5 14v-3M5 14h3M15 6l-4 4M15 6v3M15 6h-3" stroke="#ddd" fill="none"/></symbol>
<symbol id="s-menu" viewBox="0 0 20 20"><path d="M2 3h16v2.500H2zM2 9h16v2.500H2zM2 15h16v2.500H2z" fill="#ccc"/></symbol>
</svg>

<div class="app">
  <a class="logo"><svg class="logo-mark" viewBox="0 0 30 30"><path d="M1 29L17 2h6l5 27h-7l-1.200-6h-9L7 29z" fill="url(#logored)"/><path d="M14.500 17.500h4.500L18 10z" fill="#8a8a8a"/><path d="M7 29l7-9 6 3h-9z" fill="#8c1218"/></svg><span class="logo-arrow"></span></a>

  <header class="titlebar">
    <div class="qat">
      <svg class="i"><use href="#new"/></svg><svg class="i"><use href="#open"/></svg><svg class="i"><use href="#save"/></svg><svg class="i"><use href="#saveas"/></svg><svg class="i"><use href="#print"/></svg><svg class="i"><use href="#undo"/></svg><span class="tri tiny"></span><svg class="i"><use href="#redo"/></svg><span class="tri tiny"></span>
      <div class="wsbox"><svg class="i s16"><use href="#gear"/></svg><span class="wsname">AutoCAD 经典</span><span class="tri white"></span></div>
      <span class="qatmore"></span>
    </div>
    <div class="doc"><span class="d1">Autodesk AutoCAD 2018</span><span class="d2">21.三维五角星.dwg</span></div>
    <div class="search">
      <span class="sarrow"></span>
      <div class="sinput">键入关键字或短语</div>
      <svg class="i s18" viewBox="0 0 20 20"><path d="M3 6h5v12H3zM12 6h5v12h-5zM5 2h2v4H5zM13 2h2v4h-2zM8 8h4v4H8z" fill="#eee" stroke="#222"/></svg>
      <svg class="i s18" viewBox="0 0 20 20"><circle cx="10" cy="7" r="5" fill="#ddd" stroke="#222"/><path d="M2 19c0-4 4-4 6-5h4c2 1 6 1 6 5z" fill="#eee" stroke="#222"/></svg>
      <span class="login">登录</span>
      <span class="tri tiny whitei ua"></span>
      <svg class="i s18" viewBox="0 0 20 20"><path d="M1 3h3l2 10h10l2-7H5" fill="#ccd" stroke="#111" stroke-width="1.300"/><circle cx="8" cy="17" r="1.600"/><circle cx="15" cy="17" r="1.600"/></svg>
      <svg class="i s18" viewBox="0 0 20 20"><path d="M10 2l8 15H2z" fill="#99b" stroke="#eee" stroke-width="1.500"/><path d="M10 9l3 5H7z" fill="#eee"/></svg>
      <span class="tri tiny whitei a360"></span>
      <svg class="i s18" viewBox="0 0 20 20"><circle cx="10" cy="10" r="8.500" fill="#eee" stroke="#223"/><text x="10" y="15" font-size="14" font-weight="700" text-anchor="middle" fill="#2a4a9a" font-family="Liberation Sans">?</text></svg>
      <span class="tri tiny whitei helpa"></span>
    </div>
    <div class="winbtns">
      <span class="wb"><svg class="i s14" viewBox="0 0 14 14"><path d="M1 5h12v4H1z" fill="#eaf4fb" stroke="#456"/></svg></span>
      <span class="wb"><svg class="i s14" viewBox="0 0 14 14"><path d="M4 1h9v10H4zM1 3h9v10H1z" fill="#eaf4fb" stroke="#456"/><path d="M4 6h3v4H4z" fill="none" stroke="#456"/></svg></span>
      <span class="wb close"><svg class="i s14" viewBox="0 0 14 14"><path d="M2 2l10 10M12 2L2 12" stroke="#456" stroke-width="2.400"/><path d="M2 2l10 10M12 2L2 12" stroke="#eaf4fb" stroke-width="1"/></svg></span>
    </div>
  </header>

  <nav class="menubar">
    <span>文件(F)</span><span>编辑(E)</span><span>视图(V)</span><span>插入(I)</span><span>格式(O)</span><span>工具(T)</span><span>绘图(D)</span><span>标注(N)</span><span>修改(M)</span><span>参数(P)</span><span>窗口(W)</span><span>帮助(H)</span>
    <div class="mdi">
      <svg class="i s12" viewBox="0 0 12 12"><path d="M1 9h10v2H1z" fill="#111"/></svg>
      <svg class="i s12" viewBox="0 0 12 12"><path d="M4 1h7v7H4zM1 4h7v7H1z" fill="#777" stroke="#111"/></svg>
      <svg class="i s12" viewBox="0 0 12 12"><path d="M2 1l8 10M10 1L2 11" stroke="#111" stroke-width="2.200"/></svg>
    </div>
  </nav>

  <div class="tabs">
    <div class="tab t1"><span class="tl">开始</span></div>
    <div class="tab t2"><span class="tl">Drawing1*</span><span class="tx">×</span></div>
    <div class="tab t3"><span class="tl">21.三维五角星*</span><span class="tx">×</span></div>
    <div class="tab t4">+</div>
  </div>

  <div class="toolbars">
    <div class="trow r1">
      <span class="grip"></span>
      <span class="ic"><svg class="i"><use href="#new"/></svg></span><span class="ic"><svg class="i"><use href="#open"/></svg></span><span class="ic"><svg class="i"><use href="#save"/></svg></span><span class="sep"></span>
      <span class="ic"><svg class="i"><use href="#print"/></svg></span><span class="ic"><svg class="i"><use href="#preview"/></svg></span><span class="ic"><svg class="i"><use href="#publish"/></svg></span><span class="ic"><svg class="i"><use href="#ball"/></svg></span><span class="sep"></span>
      <span class="ic"><svg class="i"><use href="#cut"/></svg></span><span class="ic"><svg class="i"><use href="#copy"/></svg></span><span class="ic"><svg class="i"><use href="#paste"/></svg></span><span class="ic"><svg class="i"><use href="#match"/></svg></span><span class="ic"><svg class="i"><use href="#bstar"/></svg></span><span class="sep wide"></span>
      <span class="ic"><svg class="i"><use href="#undo"/></svg></span><span class="tri tiny gr w10"></span><span class="ic"><svg class="i"><use href="#redo"/></svg></span><span class="tri tiny gr w12"></span><span class="sep"></span>
      <span class="ic"><svg class="i"><use href="#pan"/></svg></span><span class="ic"><svg class="i"><use href="#zrt"/></svg></span><span class="ic"><svg class="i"><use href="#zwin"/></svg></span><span class="ic"><svg class="i"><use href="#zprev"/></svg></span><span class="sep"></span>
      <span class="ic"><svg class="i"><use href="#props"/></svg></span><span class="ic"><svg class="i"><use href="#dc"/></svg></span><span class="ic"><svg class="i"><use href="#tool"/></svg></span><span class="ic"><svg class="i"><use href="#sheet"/></svg></span><span class="ic"><svg class="i"><use href="#mark"/></svg></span><span class="ic"><svg class="i"><use href="#calc"/></svg></span><span class="sep wide2"></span>
      <span class="ic"><svg class="i" viewBox="0 0 20 20"><path d="M3 2h14v16H3z" fill="#555" stroke="#ccc"/><text x="10" y="15" font-size="13" font-weight="700" text-anchor="middle" fill="#eee" font-family="Liberation Sans">?</text></svg></span>
      <span class="grip g2"></span>
      <span class="ic dk"><svg class="i" viewBox="0 0 20 20"><text x="1" y="16" font-size="18" fill="#eee" font-family="Liberation Sans">A</text><path d="M12 15l6-6 1 1-5 7z" fill="#a85a28"/></svg></span><div class="dd d118 p19">Standard</div>
      <span class="grip g3"></span><span class="ic dk"><svg class="i"><use href="#dim-style"/></svg></span><div class="dd d118 p18">ISO-25</div>
      <span class="grip g3"></span><span class="ic dk"><svg class="i"><use href="#tb-style"/></svg></span><div class="dd d118 p4">Standard</div>
      <span class="grip g3"></span><span class="ic dk"><svg class="i"><use href="#ml-style"/></svg></span><div class="dd d118 p18">Standard</div>
    </div>
    <div class="trow r2">
      <div class="dd d174 p9">AutoCAD 经典</div>
      <span class="ic w24"><svg class="i"><use href="#gear"/></svg></span><span class="ic w22"><svg class="i"><use href="#wsset"/></svg></span>
      <span class="grip g4"></span>
      <span class="ic"><svg class="i"><use href="#layer"/></svg></span>
      <div class="dd d299 layerdd"><svg class="i s16"><use href="#bulb"/></svg><svg class="i s16"><use href="#sun"/></svg><svg class="i s16"><use href="#vpf"/></svg><svg class="i s16"><use href="#lock"/></svg><span class="swatch"></span><span>0</span></div>
      <span class="ic w22 ml5"><svg class="i"><use href="#layercur"/></svg></span><span class="ic w22"><svg class="i"><use href="#layerst"/></svg></span><span class="ic w22"><svg class="i"><use href="#layerdoc"/></svg></span>
      <span class="grip g5 first"></span>
      <div class="dd d149 serif"><span class="swatch sm"></span>ByLayer</div>
      <span class="grip g5"></span>
      <div class="dd d160 serif"><span class="lt lt1"></span>ByLayer</div>
      <span class="grip g5"></span>
      <div class="dd d124 serif"><span class="lt lt2"></span>ByLayer</div>
      <span class="grip g5"></span>
      <div class="dd d119 serif off p9">ByColor</div>
    </div>
  </div>

  <main class="main">
    <aside class="leftcol">
      <div class="vt even">
        <span class="vgrip"></span>
        <span class="vi"><svg class="i"><use href="#line"/></svg></span><span class="vi"><svg class="i"><use href="#xline"/></svg></span><span class="vi"><svg class="i"><use href="#pline"/></svg></span><span class="vi"><svg class="i"><use href="#poly"/></svg></span><span class="vi"><svg class="i"><use href="#rect"/></svg></span><span class="vi"><svg class="i"><use href="#arc"/></svg></span><span class="vi"><svg class="i"><use href="#circle"/></svg></span><span class="vi"><svg class="i"><use href="#cloud"/></svg></span><span class="vi"><svg class="i"><use href="#spline"/></svg></span><span class="vi"><svg class="i"><use href="#ell"/></svg></span><span class="vi"><svg class="i"><use href="#ellarc"/></svg></span><span class="vi"><svg class="i"><use href="#insert"/></svg></span><span class="vi"><svg class="i"><use href="#block"/></svg></span><span class="vi"><svg class="i"><use href="#point"/></svg></span><span class="vi"><svg class="i"><use href="#hatch"/></svg></span><span class="vi"><svg class="i"><use href="#grad"/></svg></span><span class="vi"><svg class="i"><use href="#region"/></svg></span><span class="vi"><svg class="i"><use href="#poly"/></svg></span><span class="vi"><svg class="i"><use href="#circle"/></svg></span><span class="vi"><svg class="i"><use href="#table"/></svg></span><span class="vi va">A</span><span class="vi"><svg class="i"><use href="#addpt"/></svg></span>
      </div>
    </aside>

    <div class="center">
      <div class="viewrow">
        <section class="canvas">
          <svg class="drawing" viewBox="29 129 1814 845" width="1814" height="845">
            <defs><radialGradient id="vcfade"><stop offset=".6" stop-color="#474b57"/><stop offset="1" stop-color="#3a3e4a"/></radialGradient></defs>
            <g>
              <polygon points="944,204 858,452 944,533" fill="#eef0ee"/>
              <polygon points="944,204 1031,452 944,533" fill="#9d9f99"/>
              <polygon points="1031,452 1312,452 944,533" fill="#a8a9a6"/>
              <polygon points="1312,452 1085,602 944,533" fill="#d1d3d1"/>
              <polygon points="1085,602 1172,852 944,533" fill="#9d9f99"/>
              <polygon points="1172,852 944,699 944,533" fill="#d1d3d1"/>
              <polygon points="944,699 718,852 944,533" fill="#cfd1cf"/>
              <polygon points="718,852 804,602 944,533" fill="#eef0ee"/>
              <polygon points="804,602 578,452 944,533" fill="#d1d3d1"/>
              <polygon points="578,452 858,452 944,533" fill="#a8a9a6"/>
              <polygon points="945,533 934,522 930,530" fill="#9d9f99"/>
              <polygon points="945,533 945,518 958,525 960,535" fill="#b8bab7"/>
              <polygon points="945,533 955,544 960,537" fill="#8d8f8a"/>
            </g>
            <circle cx="945" cy="533" r="15" fill="none" stroke="#eef0ee" stroke-width="1.200"/>
            <path d="M284 790L316 799M329 803L342 805" stroke="#a8e8b0" fill="none"/>
            <path d="M334 764L326 793M320 808L317 819" stroke="#e0a0c0" fill="none"/>
            <path d="M322 786v7" stroke="#7878e0"/>
            <rect x="315.500" y="793.500" width="14" height="14" fill="none" stroke="#fff" stroke-width="1.300"/>
            <path d="M33 908L78 923" stroke="#62a650" stroke-width="5" stroke-linecap="round"/>
            <path d="M91 880L97 882L84 925H80z" fill="#d8706a"/>
            <path d="M77 903h6v22h-6z" fill="#3f70b0"/>
            <path d="M77 888h11L77 901h11" fill="none" stroke="#3a70d8"/>
            <path d="M92 865l11 11M103 865l-11 11" stroke="#c84040"/>
            <path d="M34 905v-6M34 899l-6-5M34 899l6-5" stroke="#3a9a50" fill="none"/>
            <circle cx="1760" cy="225" r="54.500" fill="none" stroke="#444853" stroke-width="13"/>
            <polygon points="1743,174 1791,188 1778,233 1728,217" fill="#b6b6b4"/>
            <polygon points="1748,184 1778,194 1770,221 1738,211" fill="#a6a6a6"/>
            <polygon points="1728,217 1778,233 1773,245 1730,230" fill="#9c9c9c"/>
            <path d="M1728 217L1778 233L1791 188" stroke="#2c2c2c" stroke-dasharray="2 1" fill="none"/>
            <path d="M1748 199l29 9M1769 191l-9 32M1758 190l-3 11" stroke="#4a4a4a" stroke-width="1.400" fill="none"/>
            <path d="M1745 228l8 2M1755 231l2 1M1760 233l2 1" stroke="#555" stroke-width="1.500"/>
            <rect x="1736" y="298" width="47" height="17" rx="3" fill="#8d909c"/>
            <text class="wcs" x="1740" y="311">WCS</text>
            <path d="M1772 305l6 0-3 3z" fill="#a5a8b2"/>
            <text class="dir" transform="translate(1708 206) rotate(-70)" text-anchor="middle" y="7">北</text>
            <text class="dir" transform="translate(1777 174) rotate(20)" text-anchor="middle" y="7">东</text>
            <text class="dir" transform="translate(1817 238) rotate(110)" text-anchor="middle" y="7">南</text>
            <text class="dir" transform="translate(1742 275) rotate(20)" text-anchor="middle" y="7">西</text>
          </svg>
          <div class="viewlabel">[−][自定义视图][真实]</div>
        </section>
        <div class="vscroll"><span class="tri up"></span><span class="vthumb"></span><span class="tri"></span></div>
      </div>
      <div class="hscroll"><span class="tri left"></span><span class="hthumb"></span><span class="tri right"></span></div>
    </div>

    <aside class="rightcols">
      <div class="rcol">
        <div class="vt even">
          <span class="vgrip"></span>
          <span class="vi"><svg class="i"><use href="#brush"/></svg></span><span class="vi"><svg class="i"><use href="#copy3"/></svg></span><span class="vi"><svg class="i"><use href="#mirror"/></svg></span><span class="vi"><svg class="i"><use href="#offs"/></svg></span><span class="vi"><svg class="i"><use href="#arr"/></svg></span><span class="vi"><svg class="i"><use href="#move"/></svg></span><span class="vi"><svg class="i"><use href="#rot"/></svg></span><span class="vi"><svg class="i"><use href="#scale"/></svg></span><span class="vi"><svg class="i"><use href="#stretch"/></svg></span><span class="vi"><svg class="i"><use href="#trim"/></svg></span><span class="vi"><svg class="i"><use href="#ext"/></svg></span><span class="vi"><svg class="i"><use href="#brk"/></svg></span><span class="vi"><svg class="i"><use href="#brk2"/></svg></span><span class="vi"><svg class="i"><use href="#join"/></svg></span><span class="vi"><svg class="i"><use href="#cham"/></svg></span><span class="vi"><svg class="i"><use href="#fil"/></svg></span><span class="vi"><svg class="i"><use href="#blend"/></svg></span><span class="vi"><svg class="i"><use href="#expl"/></svg></span>
        </div>
        <div class="vt">
          <span class="vgrip"></span>
          <span class="vi"><svg class="i"><use href="#ord1"/></svg></span><span class="vi"><svg class="i"><use href="#ord2"/></svg></span><span class="vi"><svg class="i"><use href="#ord3"/></svg></span><span class="vi"><svg class="i"><use href="#ord4"/></svg></span><span class="vsep"></span><span class="vi"><svg class="i" viewBox="0 0 20 20"><text x="0" y="7" font-size="7" fill="#eee" font-family="Liberation Sans" font-weight="700">ABC</text><path d="M3 9h12v7H3z" fill="#ddd"/><path d="M14 18h5v-5z" fill="#111"/></svg></span><span class="vi"><svg class="i"><use href="#wipe"/></svg></span>
        </div>
      </div>
      <div class="rcol">
        <div class="vt">
          <span class="vgrip"></span>
          <span class="vi"><svg class="i" viewBox="0 0 20 20"><path d="M1 0h18v20H1z" fill="#dcdcd0"/><path d="M11 1l7 1-2 7-1-3-6 6-2-2 6-6z" fill="#4a7cc0"/><text x="10" y="19" font-size="7" font-weight="700" text-anchor="middle" fill="#333" font-family="Liberation Sans">SYS</text></svg></span><span class="vi"><svg class="i"><use href="#t-grid"/></svg></span><span class="vi"><svg class="i"><use href="#t-grid2"/></svg></span><span class="vsep"></span><span class="vi"><svg class="i"><use href="#t-girl"/></svg></span><span class="vi"><svg class="i" viewBox="0 0 20 20"><path d="M1 0h18v20H1z" fill="#e8e8dc"/><text x="2" y="12" font-size="11" fill="#a02020" font-family="Noto Sans CJK SC">中</text><path d="M13 2h4M13 6h4M13 10h4" stroke="#999"/><path d="M11 16h3v-2l4 3-4 3v-2h-3z" fill="#d02020"/><path d="M10 14l-4 3 4 3z" fill="#2060c0"/></svg></span><span class="vi"><svg class="i" viewBox="0 0 20 20"><path d="M1 0h18v20H1z" fill="#d8d8cc"/><text x="10" y="7" font-size="7" font-weight="700" text-anchor="middle" fill="#444" font-family="Liberation Mono">mm</text><text x="10" y="19" font-size="7" font-weight="700" text-anchor="middle" fill="#444" font-family="Liberation Mono">cm</text><path d="M9 6h3v4h2l-3.500 4L7 10h2z" fill="#d02020"/></svg></span><span class="vsep tight"></span><span class="vi"><svg class="i"><use href="#t-doc"/></svg></span><span class="vsep"></span><span class="vi"><svg class="i" viewBox="0 0 20 20"><path d="M1 0h18v20H1z" fill="#eee"/><path d="M3 2h14v9H3z" fill="#d8a0a0"/><text x="10" y="10" font-size="8" font-weight="700" text-anchor="middle" fill="#c02020" font-family="Liberation Sans">A2</text><path d="M1 14h18v6H1z" fill="#3a8ad0"/><path d="M3 14v3M6 14v3M9 14v3M12 14v3M15 14v3" stroke="#fff"/></svg></span><span class="vi"><svg class="i" viewBox="0 0 20 20"><path d="M1 0h18v20H1z" fill="#b8ccd8"/><text x="10" y="12" font-size="9" font-weight="700" text-anchor="middle" fill="#245a90" font-family="Liberation Sans">A2</text><path d="M3 15l3 3H2z" fill="#111"/></svg></span><span class="vsep"></span><span class="vi"><svg class="i" viewBox="0 0 20 20"><path d="M1 0h18v20H1z" fill="#3a6a9c"/><text x="2" y="15" font-weight="700" fill="#cde" font-family="Liberation Sans"><tspan font-size="6">VB</tspan><tspan font-size="14">?</tspan></text></svg></span><span class="vi"><svg class="i" viewBox="0 0 20 20"><path d="M1 0h18v20H1z" fill="#3a6a9c"/><path d="M3 2h14v7H3z" fill="#9cc"/><text x="10" y="18" font-size="7" font-weight="700" text-anchor="middle" fill="#fff" font-family="Liberation Sans">Ver</text></svg></span><span class="vi"><svg class="i"><use href="#t-house"/></svg></span><span class="vi"><svg class="i"><use href="#t-bgrid"/></svg></span>
        </div>
        <div class="vt">
          <span class="vgrip short"></span>
          <span class="vi"><svg class="i"><use href="#t-tree"/></svg></span><span class="vsep"></span><span class="vi"><svg class="i"><use href="#t-tree2"/></svg></span><span class="vi"><svg class="i"><use href="#t-tree"/></svg></span><span class="vi"><svg class="i"><use href="#t-tree"/></svg></span><span class="vsep"></span><span class="vi"><svg class="i"><use href="#t-db"/></svg></span><span class="vi"><svg class="i"><use href="#t-db2"/></svg></span><span class="vi"><svg class="i"><use href="#t-db3"/></svg></span><span class="vi"><svg class="i"><use href="#t-db4"/></svg></span><span class="vsep"></span><span class="vi"><svg class="i"><use href="#t-c"/></svg></span><span class="vi"><svg class="i"><use href="#t-c2"/></svg></span><span class="vi"><svg class="i"><use href="#t-c3"/></svg></span><span class="vi"><svg class="i"><use href="#t-c4"/></svg></span><span class="vi"><svg class="i"><use href="#t-c5"/></svg></span><span class="vi"><svg class="i"><use href="#t-c6"/></svg></span><span class="vsep mid"></span><span class="vi"><svg class="i"><use href="#t-xyz"/></svg></span><span class="vi"><svg class="i" viewBox="0 0 20 20"><path d="M1 0h18v20H1z" fill="#d8d8cc"/><path d="M5 2h11v8H5z" fill="#eee" stroke="#444"/><path d="M7 4h7M7 6h7M7 8h7" stroke="#444" stroke-width=".7"/><text x="10" y="18" font-size="7" text-anchor="middle" fill="#222" font-family="Liberation Mono">x y=</text></svg></span><span class="vi"><svg class="i" viewBox="0 0 20 20"><path d="M1 0h18v20H1z" fill="#a8c0d8"/><circle cx="10" cy="8" r="7" fill="#3a8ad0"/><path d="M6 4h6l-2 5H6zM12 8h4l-2 4z" fill="#60a850"/><text x="10" y="18" font-size="7" font-weight="700" text-anchor="middle" fill="#c02020" font-family="Liberation Sans">Xml</text></svg></span><span class="vsep"></span><span class="vi"><svg class="i" viewBox="0 0 20 20"><path d="M1 0h18v20H1z" fill="#d8d8cc"/><text x="10" y="9" font-size="8" font-weight="700" text-anchor="middle" fill="#c02020" font-family="Liberation Sans">com</text><path d="M7 13l9 6 2-2-9-6z" fill="#555"/></svg></span><span class="vi"><svg class="i"><use href="#t-bolt"/></svg></span>
        </div>
        <div class="vt">
          <span class="vgrip short"></span>
          <span class="vi"><svg class="i"><use href="#t-hand"/></svg></span><span class="vi"><svg class="i"><use href="#t-harrow"/></svg></span><span class="vi"><svg class="i" viewBox="0 0 20 20"><path d="M1 1h18v18H1z" fill="#d8d8cc"/><text x="2" y="12" font-size="12" font-weight="700" fill="#456" font-family="Liberation Sans">A</text><path d="M6 15l6-4 6 5-4 3H8z" fill="#c06a2c"/></svg></span><span class="vsep"></span><span class="vi"><svg class="i"><use href="#t-last"/></svg></span>
        </div>
      </div>
    </aside>
  </main>

  <section class="cmd">
    <div class="cmdside">
      <span class="cgrip"></span>
      <span class="cx">×</span>
      <svg class="i cwrench" viewBox="0 0 20 20"><path d="M2 5l3-3 2 2 1-2c2 0 3 2 2 4l9 9-3 3-9-9C5 10 3 8 2 5z" fill="#eee"/></svg>
    </div>
    <div class="cmdmain">
      <div class="history"><div>命令:</div><div>命令:</div></div>
      <div class="cmdline"><svg class="i s16" viewBox="0 0 16 16"><path d="M1 1h14v14H1z" fill="#dfe6ee" stroke="#7a8a9a"/><path d="M4 5l3 3-3 3M8 11h4" stroke="#123" fill="none"/></svg><span class="tri tiny lg"></span><span class="ph">键入命令</span></div>
    </div>
  </section>

  <footer class="status">
    <div class="ltabs">
      <span class="ltab on">模型</span><span class="ltab">布局1</span><span class="ltab">布局2</span><span class="ltab pl">+</span>
    </div>
    <div class="spanel">
      <span class="seg sdim">DIMSCALE:&lt;1:1&gt; DIMSTY:&lt;ISO-25&gt; STYLE:&lt;Standard&gt;</span>
      <span class="seg scoord">3152.2757, 1332.1019, 0.0000</span>
      <span class="seg smodel">模型</span>
      <span class="s w24 b"><svg class="i"><use href="#s-grid"/></svg></span><span class="s w24"><svg class="i"><use href="#s-snap"/></svg></span><span class="s w16"><span class="tri white"></span></span>
      <span class="s w26 b"><svg class="i"><use href="#s-note"/></svg></span>
      <span class="s w25 b"><svg class="i"><use href="#s-dyn"/></svg></span>
      <span class="s w25 b"><svg class="i"><use href="#s-ortho"/></svg></span><span class="s w24"><svg class="i"><use href="#s-polar"/></svg></span><span class="s w14"><span class="tri white"></span></span><span class="s w25"><svg class="i"><use href="#s-iso"/></svg></span><span class="s w14"><span class="tri white"></span></span>
      <span class="s w27 b"><svg class="i"><use href="#s-track"/></svg></span><span class="s w24"><svg class="i"><use href="#s-osnap"/></svg></span><span class="s w14"><span class="tri white"></span></span>
      <span class="s w26 b"><svg class="i"><use href="#s-lw"/></svg></span>
      <span class="s w26 b"><svg class="i"><use href="#s-trans"/></svg></span>
      <span class="s w24 b"><svg class="i"><use href="#s-sel"/></svg></span>
      <span class="s w24 b"><svg class="i"><use href="#s-cube"/></svg></span><span class="s w16"><span class="tri white"></span></span>
      <span class="s w28 b"><svg class="i"><use href="#s-ucs"/></svg></span><span class="s w22"><svg class="i"><use href="#s-cube2"/></svg></span><span class="s w16"><span class="tri white"></span></span><span class="s w24"><svg class="i"><use href="#s-gizmo"/></svg></span><span class="s w14"><span class="tri white"></span></span>
      <span class="s w28 b"><svg class="i"><use href="#s-a"/></svg></span><span class="s w24"><svg class="i"><use href="#s-a2"/></svg></span><span class="s w24"><svg class="i"><use href="#s-a3"/></svg></span><span class="s stext">1:1 / 100%</span><span class="s w14"><span class="tri white"></span></span>
      <span class="s w28 b"><svg class="i"><use href="#s-gear"/></svg></span><span class="s w14"><span class="tri white"></span></span>
      <span class="s w26 b"><svg class="i"><use href="#s-plus"/></svg></span>
      <span class="s w28 b"><svg class="i"><use href="#s-bar"/></svg></span><span class="s stext2">小数</span><span class="s w14"><span class="tri white"></span></span>
      <span class="s w27 b"><svg class="i"><use href="#s-calc"/></svg></span>
      <span class="s w26 b"><svg class="i"><use href="#s-win"/></svg></span><span class="s w14"><span class="tri white"></span></span>
      <span class="s w26 b"><svg class="i"><use href="#s-shape"/></svg></span>
      <span class="s w28 b"><svg class="i"><use href="#s-hw"/></svg></span>
      <span class="s w25 b"><svg class="i"><use href="#s-iso2"/></svg></span>
      <span class="s w27 b"><svg class="i"><use href="#s-full"/></svg></span>
      <span class="s w25 b"><svg class="i"><use href="#s-menu"/></svg></span>
    </div>
  </footer>
</div>
</body>
</html>
```

FILE: styles.css
```css
* { box-sizing: border-box; }
html, body { margin: 0; padding: 0; }
body { width: 1920px; height: 1080px; overflow: hidden; background: #5c5c5c; font-family: "Noto Sans", "Noto Sans CJK SC", sans-serif; font-size: 12px; }
.defs { position: absolute; width: 0; height: 0; }
.app { position: relative; width: 1920px; height: 1080px; display: flex; flex-direction: column; overflow: hidden; }
.i { width: 20px; height: 20px; flex: none; display: block; }
.s12 { width: 12px; height: 12px; }
.s14 { width: 14px; height: 14px; }
.s16 { width: 16px; height: 16px; }
.s18 { width: 18px; height: 18px; }

.tri { display: inline-block; flex: none; width: 0; height: 0; border-left: 4px solid transparent; border-right: 4px solid transparent; border-top: 5px solid #111; }
.tri.white { border-top-color: #eee; }
.tri.tiny { border-left-width: 3px; border-right-width: 3px; border-top: 3px solid #ccc; }
.tri.tiny.gr { border-top-color: #888; }
.tri.tiny.lg { border-top-color: #888; margin: 0 4px; }
.tri.tiny.whitei { border-top-color: #eee; }
.tri.up { border-top: 0; border-bottom: 5px solid #222; }
.tri.left { border: 4px solid transparent; border-left: 0; border-right: 5px solid #222; }
.tri.right { border: 4px solid transparent; border-right: 0; border-left: 5px solid #222; }
.tri.tiny.w10 { margin: 0 2px; }
.tri.tiny.w12 { margin: 0 3px; }

.logo { position: absolute; left: 0; top: 0; width: 41px; height: 41px; background: linear-gradient(135deg, #8c8c8c, #6e6e6e 55%, #5c5c5c); border: 1px solid #1c1c1c; z-index: 3; overflow: hidden; }
.logo-mark { display: block; width: 29px; height: 29px; margin: 2px 0 0 2px; }
.logo-arrow { position: absolute; right: 3px; top: 17px; border: 3.500px solid transparent; border-top: 4px solid #222; }

.titlebar { height: 24px; flex: none; display: flex; background: linear-gradient(90deg, #bcdff4 0%, #cfe7f8 35%, #d8ebf9 50%, #c5e2f5 75%, #d4eafa 100%); border-bottom: 1px solid #333; }
.qat { margin-left: 40px; width: 395px; display: flex; align-items: center; gap: 5px; padding-left: 7.500px; background: linear-gradient(#9a9a9a, #757575); }
.qat .i { width: 19px; height: 19px; }
.wsbox { width: 179px; height: 21px; margin-left: 1.500px; background: #4b4b4b; border: 1px solid #2a2a2a; display: flex; align-items: center; padding: 0 2px; color: #f0f0f0; font-size: 12px; gap: 2px; }
.wsbox .i { width: 16px; height: 16px; }
.wsname { flex: 1; }
.qatmore { width: 11px; height: 21px; margin-left: -2px; background: #8a8a8a; position: relative; }
.qatmore::before { content: ""; display: block; position: absolute; left: 2px; top: 7px; width: 7px; height: 2px; background: #eee; }
.qatmore::after { content: ""; display: block; position: absolute; left: 2px; top: 11px; border: 3.500px solid transparent; border-top: 4px solid #eee; }
.doc { width: 916px; padding-left: 326px; display: flex; gap: 17px; align-items: center; color: #111; font-family: "Noto Sans CJK SC", sans-serif; font-size: 12.500px; white-space: nowrap; }
.d1 { letter-spacing: .15px; }
.d2 { letter-spacing: -.3px; }
.search { width: 447px; display: flex; align-items: center; background: linear-gradient(#8a8a8a, #6f6f6f); }
.sarrow { width: 14px; height: 23px; background: #8a8a8a; position: relative; }
.sarrow::after { content: ""; position: absolute; left: 4px; top: 7px; border: 4px solid transparent; border-left: 4px solid #eee; }
.sinput { width: 181px; height: 23px; background: #5d5d5d; border: 1px solid #333; color: #c4c4c4; font-style: italic; font-size: 11px; line-height: 20px; padding-left: 3px; }
.search .i:nth-of-type(1) { margin-left: 3px; }
.search .i:nth-of-type(2) { margin-left: 5px; }
.search .i:nth-of-type(3) { margin-left: 0; }
.login { color: #eee; font-size: 12px; margin-left: 6px; width: 24px; white-space: nowrap; }
.ua { margin-left: 58px; margin-right: 10px; }
.search .i:nth-of-type(4) { margin-left: 6px; }
.a360 { margin-left: 4px; margin-right: 17px; }
.helpa { margin-left: 5px; }
.winbtns { margin-left: 17px; width: 90px; height: 17px; display: flex; border: 1px solid #7a9ab5; border-top: 0; border-radius: 0 0 4px 4px; background: linear-gradient(#d5e9f8, #b9d7ee); }
.wb { width: 27px; display: flex; align-items: center; justify-content: center; border-right: 1px solid #9ab6cc; }
.wb.close { width: 34px; flex: 1; border-right: 0; }

.menubar { height: 21px; flex: none; display: flex; align-items: center; padding-left: 55px; gap: 24.600px; background: linear-gradient(#9a9a9a, #7a7a7a 50%, #4a4a4a); color: #e8e8e8; font-family: "Noto Sans CJK SC", sans-serif; font-size: 12px; white-space: nowrap; }
.mdi { margin-left: auto; display: flex; gap: 4px; padding-right: 5px; align-items: center; }

.tabs { height: 25px; flex: none; background: #353535; display: flex; padding: 3px 0 0 20px; color: #a8a8a8; }
.tab { height: 22px; position: relative; display: flex; align-items: center; background: #484848; clip-path: polygon(0 100%, 7px 20%, 13px 0, calc(100% - 13px) 0, calc(100% - 7px) 20%, 100% 100%); font-family: "Noto Sans CJK SC", sans-serif; }
.t1 { width: 125px; padding-left: 11px; color: #8e8e8e; }
.t2 { width: 123px; padding-left: 10px; color: #8e8e8e; }
.t3 { width: 122px; padding-left: 10px; background: #5c5c5c; color: #ededed; }
.t4 { width: 23px; margin-left: 7px; justify-content: center; font-size: 15px; font-weight: 700; color: #bbb; }
.tx { position: absolute; right: 9px; font-size: 15px; color: #777; font-weight: 700; }

.toolbars { height: 59px; flex: none; background: #5c5c5c; padding-top: 6px; display: flex; flex-direction: column; gap: 4px; }
.trow { display: flex; align-items: center; }
.r1 { height: 22px; padding-left: 3px; }
.r2 { height: 22px; padding-left: 9px; }
.grip { flex: none; width: 6px; height: 20px; background-image: linear-gradient(90deg, #999 50%, transparent 50%), linear-gradient(#222 50%, transparent 50%); background-size: 2px 2px; background-blend-mode: multiply; }
.g2 { margin-left: 4px; width: 8px; }
.g3 { width: 4px; margin: 0 2px; background: none; border-left: 2px solid #aaa; border-right: 2px solid #333; }
.g4 { margin: 0 2px 0 3px; }
.g5 { width: 4px; margin: 0 1px 0 2px; height: 22px; background: none; border-left: 2px solid #999; border-right: 1px solid #333; }
.g5.first { margin-left: 4px; }
.ic { flex: none; width: 23px; height: 22px; display: flex; align-items: center; justify-content: center; }
.ic .i { width: 18px; height: 18px; }
.ic.dk { background: #4a4a4a; }
.ic.w22 { width: 22px; }
.ic.w24 { width: 24px; }
.ml5 { margin-left: 5px; }
.sep { flex: none; width: 6px; height: 22px; position: relative; }
.sep::after { content: ""; position: absolute; left: 2px; top: 0; bottom: 0; width: 1px; background: #d0d0d0; }
.sep.wide { width: 8px; }
.sep.wide2 { width: 6px; }
.dd { flex: none; height: 22px; position: relative; display: flex; align-items: center; background: linear-gradient(#fafafa, #d8d8d8 45%, #c2c2c2); border: 1px solid #2e2e2e; border-radius: 2px; color: #111; font-size: 12px; white-space: nowrap; font-family: "Noto Sans", "Noto Sans CJK SC", sans-serif; }
.dd::after { content: ""; position: absolute; right: 5px; top: 50%; margin-top: -2px; border: 3.500px solid transparent; border-top: 5px solid #111; }
.d118 { width: 118px; }
.d174 { width: 174px; }
.d299 { width: 299px; gap: .5px; padding-left: 3px; }
.d149 { width: 149px; }
.d160 { width: 160px; }
.d124 { width: 124px; }
.d119 { width: 119px; }
.p4 { padding-left: 4px; }
.p9 { padding-left: 9px; }
.p18 { padding-left: 18px; }
.p19 { padding-left: 19px; }
.swatch { width: 11px; height: 11px; background: #fff; border: 1px solid #111; margin: 0 3px 0 2px; flex: none; }
.swatch.sm { width: 10px; height: 10px; margin: 0 2px 0 2px; }
.serif { font-family: "Liberation Mono", monospace; font-size: 10px; padding-left: 3px; }
.off { color: #999; background: linear-gradient(#f8f8f8, #e4e4e4); }
.off::after { border-top-color: #bbb; }
.serif.p9 { padding-left: 9px; }
.lt { height: 1px; background: #111; flex: none; margin: 0 6px 0 1px; }
.lt1 { width: 58px; }
.lt2 { width: 34px; margin-left: 2px; }
.layerdd span:last-child { font-size: 12px; }

.main { height: 864px; flex: none; display: flex; background: #5f5f5f; }
.leftcol { width: 29px; flex: none; background: linear-gradient(90deg, #5f5f5f 85%, #6c6c6c); }
.vt { width: 25px; background: #5e5e5e; border: 1px solid #3a3a3a; border-radius: 2px; display: flex; flex-direction: column; align-items: center; }
.vgrip { flex: none; width: 14px; height: 4px; margin: 3px 0 3px; background: repeating-conic-gradient(#c4c4c4 0 25%, transparent 0 50%) 0 0 / 2px 2px; }
.vgrip.short { margin: 1px 0 1px; }
.vt.even .vgrip { margin: 2px 0; }
.vi { flex: none; width: 22px; height: 21.800px; display: flex; align-items: center; justify-content: center; }
.vt.even .vi { height: 22px; }
.vi .i { width: 19px; height: 19px; }
.va { font: 700 21px/22px "Liberation Sans", sans-serif; color: #eee; }
.vsep { flex: none; width: 20px; height: 1px; background: #ddd; margin: 2px 0 3px; }
.vsep.tight { margin: 0; }
.vsep.mid { margin: 3px 0 5px; }
.center { width: 1831px; flex: none; display: flex; flex-direction: column; }
.viewrow { height: 845px; flex: none; display: flex; }
.canvas { position: relative; width: 1814px; height: 845px; background: #21252f; overflow: hidden; }
.drawing { display: block; }
.viewlabel { position: absolute; left: 3px; top: 4px; color: #d8d8d8; font-family: "Noto Sans CJK SC", sans-serif; font-size: 12px; white-space: nowrap; }
.dir { font-family: "Noto Sans CJK SC", sans-serif; font-size: 19px; fill: #a7a9ae; }
.wcs { font-family: "Liberation Sans", sans-serif; font-size: 11px; fill: #3d4048; }
.vscroll { width: 17px; flex: none; background: linear-gradient(90deg, #f8f8f8, #eaeaea); display: flex; flex-direction: column; align-items: center; position: relative; padding: 7px 0; justify-content: space-between; }
.vthumb { position: absolute; left: 2px; top: 497px; width: 14px; height: 15px; background: linear-gradient(#f5f5f5, #c8c8c8); border: 1px solid #999; border-radius: 2px; }
.hscroll { height: 17px; flex: none; background: linear-gradient(#f5f5f5, #e6e6e6); display: flex; align-items: center; position: relative; padding: 0 23px 0 7px; justify-content: space-between; }
.hthumb { position: absolute; left: 915px; top: 1px; width: 15px; height: 15px; background: linear-gradient(#f5f5f5, #c8c8c8); border: 1px solid #999; border-radius: 2px; }
.rightcols { flex: 1; display: flex; padding-left: 4px; gap: 3px; background: #5f5f5f; overflow: hidden; }
.rcol { width: 25px; display: flex; flex-direction: column; gap: 2px; }

.cmd { height: 59px; flex: none; display: flex; border-top: 2px solid #333; margin-top: -2px; position: relative; }
.cmdside { width: 23px; flex: none; background: #4a4a4a; display: flex; flex-direction: column; align-items: center; }
.cgrip { width: 18px; height: 6px; margin-top: 3px; background: repeating-conic-gradient(#bbb 0 25%, transparent 0 50%) 0 0 / 2px 2px; }
.cx { color: #eee; font-size: 19px; font-weight: 700; line-height: 18px; margin-top: 4px; height: 20px; }
.cwrench { margin-top: 3px; }
.cmdmain { flex: 1; display: flex; flex-direction: column; }
.history { height: 34px; background: #c6c6c6; border-bottom: 1px solid #777; padding-left: 2px; color: #111; font-family: "Noto Sans CJK SC", sans-serif; font-size: 13px; line-height: 15px; font-weight: 500; padding-top: 1px; }
.cmdline { flex: 1; background: #fff; display: flex; align-items: center; padding-left: 5px; }
.ph { color: #a8a8a8; margin-left: 3px; font-size: 12px; font-family: "Noto Sans CJK SC", sans-serif; }

.status { height: 30px; flex: none; background: #3a3a3a; border-top: 2px solid #777; display: flex; position: relative; color: #eee; }
.ltabs { width: 375px; flex: none; display: flex; padding-left: 13px; font-family: "Noto Sans CJK SC", sans-serif; gap: 2px; }
.ltab { width: 50px; height: 18px; display: flex; justify-content: center; align-items: center; background: #4a4a4a; color: #999; clip-path: polygon(0 0, 100% 0, calc(100% - 6px) 100%, 6px 100%); }
.ltab.on { width: 45px; color: #fff; font-weight: 700; background: #6a6a6a; }
.ltab.pl { width: 22px; margin-left: 4px; color: #ccc; font-weight: 700; font-size: 15px; }
.spanel { flex: 1; height: 26px; background: #565656; display: flex; align-items: center; border-left: 1px solid #777; }
.seg { height: 26px; display: flex; align-items: center; border-left: 1px solid #777; white-space: nowrap; font-family: "Noto Sans", "Noto Sans CJK SC", sans-serif; }
.sdim { width: 311px; padding-left: 6px; border-left: 0; font-size: 12px; }
.scoord { width: 182px; padding-left: 8px; }
.smodel { width: 32px; padding-left: 4px; font-weight: 700; font-family: "Noto Sans CJK SC", sans-serif; }
.s { height: 26px; flex: none; display: flex; align-items: center; justify-content: center; }
.s .i { width: 18px; height: 18px; }
.b { border-left: 1px solid #777; }
.w14 { width: 14px; } .w16 { width: 16px; } .w22 { width: 22px; } .w24 { width: 24px; } .w25 { width: 25px; } .w26 { width: 26px; } .w27 { width: 27px; } .w28 { width: 28px; }
.stext { width: 65px; font-size: 12px; white-space: nowrap; }
.stext2 { width: 56px; justify-content: flex-start; padding-left: 3px; font-family: "Noto Sans CJK SC", sans-serif; }
```
